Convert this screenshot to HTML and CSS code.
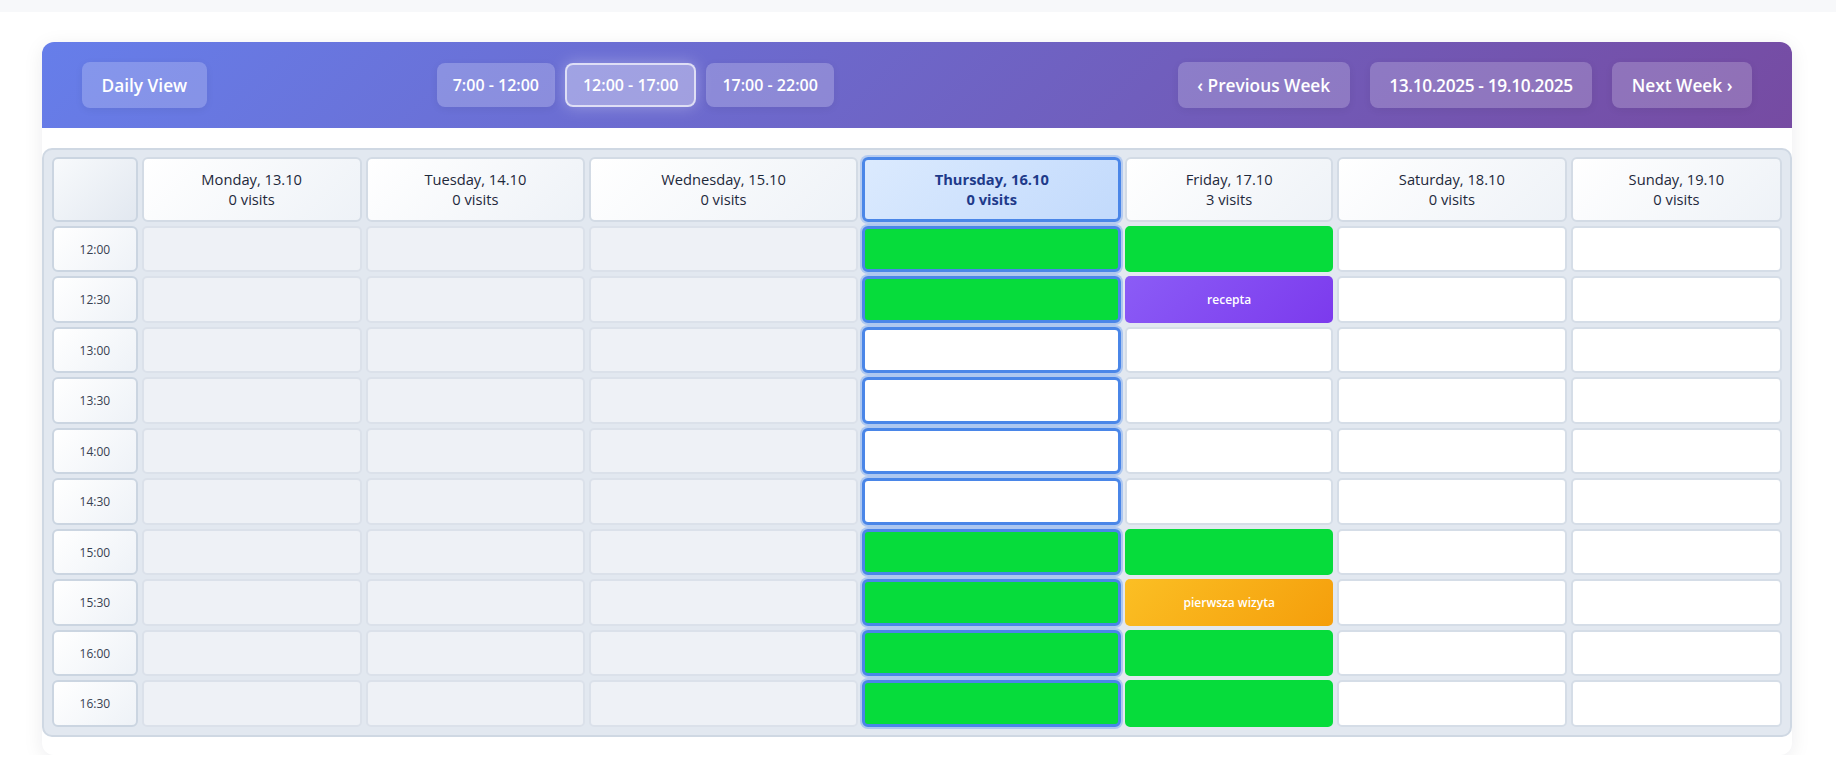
FILE: index.html
```html
<!DOCTYPE html>
<html lang="en">
<head>
<meta charset="utf-8">
<title>Weekly schedule</title>
<link rel="stylesheet" href="styles.css">
</head>
<body>
<div class="topbar"></div>
<div class="page">
  <div class="card">
    <div class="card-header">
      <button class="hbtn">Daily View</button>
      <div class="ranges">
        <button class="rbtn">7:00 - 12:00</button>
        <button class="rbtn active">12:00 - 17:00</button>
        <button class="rbtn">17:00 - 22:00</button>
      </div>
      <div class="nav">
        <button class="hbtn">‹ Previous Week</button>
        <div class="hbtn range-label">13.10.2025 - 19.10.2025</div>
        <button class="hbtn">Next Week ›</button>
      </div>
    </div>
    <div class="card-body">
      <div class="calendar">
        <div class="corner"></div>
        <div class="dayhead">Monday, 13.10<br>0 visits</div>
        <div class="dayhead">Tuesday, 14.10<br>0 visits</div>
        <div class="dayhead">Wednesday, 15.10<br>0 visits</div>
        <div class="dayhead today">Thursday, 16.10<br>0 visits</div>
        <div class="dayhead">Friday, 17.10<br>3 visits</div>
        <div class="dayhead">Saturday, 18.10<br>0 visits</div>
        <div class="dayhead">Sunday, 19.10<br>0 visits</div>

        <div class="time">12:00</div>
        <div class="slot past"></div><div class="slot past"></div><div class="slot past"></div>
        <div class="slot today booked"></div>
        <div class="slot booked"></div>
        <div class="slot"></div><div class="slot"></div>

        <div class="time">12:30</div>
        <div class="slot past"></div><div class="slot past"></div><div class="slot past"></div>
        <div class="slot today booked"></div>
        <div class="slot event recepta">recepta</div>
        <div class="slot"></div><div class="slot"></div>

        <div class="time">13:00</div>
        <div class="slot past"></div><div class="slot past"></div><div class="slot past"></div>
        <div class="slot today"></div>
        <div class="slot"></div>
        <div class="slot"></div><div class="slot"></div>

        <div class="time">13:30</div>
        <div class="slot past"></div><div class="slot past"></div><div class="slot past"></div>
        <div class="slot today"></div>
        <div class="slot"></div>
        <div class="slot"></div><div class="slot"></div>

        <div class="time">14:00</div>
        <div class="slot past"></div><div class="slot past"></div><div class="slot past"></div>
        <div class="slot today"></div>
        <div class="slot"></div>
        <div class="slot"></div><div class="slot"></div>

        <div class="time">14:30</div>
        <div class="slot past"></div><div class="slot past"></div><div class="slot past"></div>
        <div class="slot today"></div>
        <div class="slot"></div>
        <div class="slot"></div><div class="slot"></div>

        <div class="time">15:00</div>
        <div class="slot past"></div><div class="slot past"></div><div class="slot past"></div>
        <div class="slot today booked"></div>
        <div class="slot booked"></div>
        <div class="slot"></div><div class="slot"></div>

        <div class="time">15:30</div>
        <div class="slot past"></div><div class="slot past"></div><div class="slot past"></div>
        <div class="slot today booked"></div>
        <div class="slot event first">pierwsza wizyta</div>
        <div class="slot"></div><div class="slot"></div>

        <div class="time">16:00</div>
        <div class="slot past"></div><div class="slot past"></div><div class="slot past"></div>
        <div class="slot today booked"></div>
        <div class="slot booked"></div>
        <div class="slot"></div><div class="slot"></div>

        <div class="time">16:30</div>
        <div class="slot past"></div><div class="slot past"></div><div class="slot past"></div>
        <div class="slot today booked"></div>
        <div class="slot booked"></div>
        <div class="slot"></div><div class="slot"></div>
      </div>
    </div>
  </div>
</div>
</body>
</html>
```
FILE: styles.css
```css
* { box-sizing: border-box; }

html, body {
  margin: 0;
  padding: 0;
  background: #ffffff;
  font-family: "Open Sans", "Noto Sans", sans-serif;
  color: #1e293b;
  overflow: hidden;
}

.topbar {
  height: 12px;
  background: #f7f8fa;
}

.page {
  padding: 30px 44px 0 42px;
}

.card {
  background: #ffffff;
  border-radius: 12px;
  box-shadow: 0 4px 20px rgba(15, 23, 42, 0.08);
  overflow: hidden;
}

.card-header {
  display: flex;
  align-items: center;
  padding: 20px 40px;
  background: linear-gradient(135deg, #667eea 0%, #764ba2 100%);
}

button { font-family: inherit; }

.hbtn {
  display: block;
  border: none;
  border-radius: 8px;
  background: rgba(255, 255, 255, 0.2);
  color: #ffffff;
  font-size: 17.3px;
  font-weight: 600;
  line-height: 23px;
  padding: 11.7px 19.5px;
  box-shadow: 0 2px 8px rgba(0, 0, 0, 0.06);
  white-space: nowrap;
}

.range-label {
  letter-spacing: -0.35px;
}

.ranges {
  display: flex;
  align-items: center;
  gap: 10px;
  margin-left: 230px;
}

.rbtn {
  display: block;
  border: none;
  border-radius: 8px;
  background: rgba(255, 255, 255, 0.22);
  color: #ffffff;
  font-size: 16px;
  font-weight: 600;
  line-height: 22px;
  padding: 11.2px 16px;
  box-shadow: 0 2px 8px rgba(0, 0, 0, 0.06);
  white-space: nowrap;
}

.rbtn.active {
  background: rgba(255, 255, 255, 0.36);
  border: 2px solid rgba(255, 255, 255, 0.65);
  padding: 9.2px 16px;
  box-shadow: 0 0 16px rgba(255, 255, 255, 0.3);
}

.nav {
  display: flex;
  align-items: center;
  gap: 20px;
  margin-left: auto;
}

.card-body {
  padding: 20px 0 18px;
}

.calendar {
  display: grid;
  grid-template-columns: 85.7px 220px 219.3px 269px 259.5px 207.4px 230px 1fr;
  grid-template-rows: 64.4px repeat(10, 46.5px);
  gap: 4px;
  padding: 7px 8px 8px;
  background: #e2e8f0;
  border: 2px solid #cfd8e3;
  border-radius: 10px;
}

.corner {
  border: 2px solid #cbd5e1;
  border-radius: 6px;
  background: linear-gradient(135deg, #f8fafc 0%, #e2e8f0 100%);
}

.dayhead {
  display: flex;
  align-items: center;
  justify-content: center;
  text-align: center;
  padding-top: 1px;
  border: 2px solid #d3dbe5;
  border-radius: 6px;
  background: linear-gradient(135deg, #ffffff 0%, #eef2f7 100%);
  font-size: 14.7px;
  font-weight: 500;
  line-height: 19.7px;
  color: #1e293b;
}

.dayhead.today {
  border: 3px solid #4a86e8;
  box-shadow: 0 0 0 2px rgba(96, 150, 240, 0.35);
  background: linear-gradient(135deg, #dbeafe 0%, #c2dafc 100%);
  color: #1e3a8a;
  font-weight: 700;
}

.time {
  display: flex;
  align-items: center;
  justify-content: center;
  border: 2px solid #cbd5e1;
  border-radius: 6px;
  background: linear-gradient(135deg, #ffffff 0%, #eef2f7 100%);
  font-size: 12px;
  font-weight: 500;
  color: #374151;
}

.slot {
  display: flex;
  align-items: center;
  justify-content: center;
  background: #ffffff;
  border: 2px solid #d5dde7;
  border-radius: 5px;
}

.slot.past {
  background: #eef1f6;
  border-color: #dbe1ea;
}

.slot.booked {
  background: #06dc3b;
  border-color: #06dc3b;
}

.slot.today {
  border: 3px solid #4a86e8;
  box-shadow: 0 0 0 2px rgba(96, 150, 240, 0.4);
  border-radius: 6px;
}

.slot.event {
  border: none;
  color: #ffffff;
  font-size: 12px;
  font-weight: 600;
}

.slot.recepta {
  background: linear-gradient(135deg, #8b5cf6 0%, #7c3aed 100%);
}

.slot.first {
  background: linear-gradient(135deg, #fbbf24 0%, #f59e0b 100%);
}
```
